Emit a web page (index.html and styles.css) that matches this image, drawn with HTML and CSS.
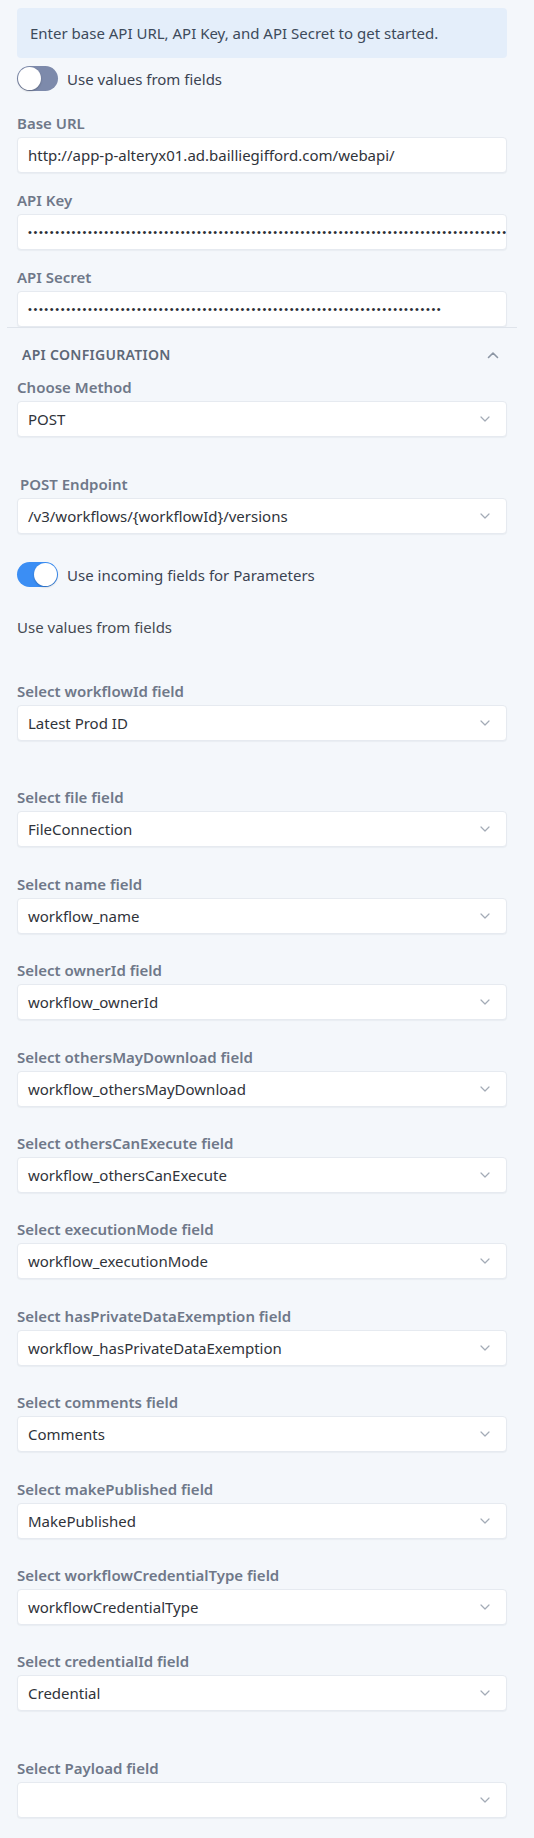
FILE: index.html
```html
<!DOCTYPE html>
<html lang="en">
<head>
<meta charset="utf-8">
<title>API Configuration</title>
<link rel="stylesheet" href="styles.css">
</head>
<body>
<div class="panel">
  <div class="info">Enter base API URL, API Key, and API Secret to get started.</div>

  <div class="toggle-row first-toggle">
    <span class="switch off"><span class="knob"></span></span>
    <span class="toggle-label">Use values from fields</span>
  </div>

  <div class="cred">
    <div class="label">Base URL</div>
    <div class="input">http://app-p-alteryx01.ad.bailliegifford.com/webapi/</div>
  </div>
  <div class="cred">
    <div class="label">API Key</div>
    <div class="input dots">••••••••••••••••••••••••••••••••••••••••••••••••••••••••••••••••••••••••••••••••••••••••••••••••</div>
  </div>
  <div class="cred last">
    <div class="label">API Secret</div>
    <div class="input dots">••••••••••••••••••••••••••••••••••••••••••••••••••••••••••••••••••••••••••••</div>
  </div>

  <section class="accordion">
    <div class="acc-head">
      <span class="acc-title">API CONFIGURATION</span>
      <svg class="caret-up" width="12" height="8" viewBox="0 0 12 8"><path d="M1.5 6.5 L6 2 L10.5 6.5" fill="none" stroke="#8c96a4" stroke-width="1.6" stroke-linecap="round" stroke-linejoin="round"/></svg>
    </div>

    <div class="pick method">
      <div class="label">Choose Method</div>
      <div class="select"><span>POST</span><svg class="chev" width="10" height="6" viewBox="0 0 10 6"><path d="M1 1 L5 5 L9 1" fill="none" stroke="#a3abb6" stroke-width="1.2" stroke-linecap="round" stroke-linejoin="round"/></svg></div>
    </div>

    <div class="pick endpoint">
      <div class="label indent">POST Endpoint</div>
      <div class="select"><span>/v3/workflows/{workflowId}/versions</span><svg class="chev" width="10" height="6" viewBox="0 0 10 6"><path d="M1 1 L5 5 L9 1" fill="none" stroke="#a3abb6" stroke-width="1.2" stroke-linecap="round" stroke-linejoin="round"/></svg></div>
    </div>

    <div class="toggle-row param-toggle">
      <span class="switch on"><span class="knob"></span></span>
      <span class="toggle-label">Use incoming fields for Parameters</span>
    </div>

    <div class="plain">Use values from fields</div>

    <div class="pick spaced">
      <div class="label">Select workflowId field</div>
      <div class="select"><span>Latest Prod ID</span><svg class="chev" width="10" height="6" viewBox="0 0 10 6"><path d="M1 1 L5 5 L9 1" fill="none" stroke="#a3abb6" stroke-width="1.2" stroke-linecap="round" stroke-linejoin="round"/></svg></div>
    </div>

    <div class="pick">
      <div class="label">Select file field</div>
      <div class="select"><span>FileConnection</span><svg class="chev" width="10" height="6" viewBox="0 0 10 6"><path d="M1 1 L5 5 L9 1" fill="none" stroke="#a3abb6" stroke-width="1.2" stroke-linecap="round" stroke-linejoin="round"/></svg></div>
    </div>

    <div class="pick">
      <div class="label">Select name field</div>
      <div class="select"><span>workflow_name</span><svg class="chev" width="10" height="6" viewBox="0 0 10 6"><path d="M1 1 L5 5 L9 1" fill="none" stroke="#a3abb6" stroke-width="1.2" stroke-linecap="round" stroke-linejoin="round"/></svg></div>
    </div>

    <div class="pick">
      <div class="label">Select ownerId field</div>
      <div class="select"><span>workflow_ownerId</span><svg class="chev" width="10" height="6" viewBox="0 0 10 6"><path d="M1 1 L5 5 L9 1" fill="none" stroke="#a3abb6" stroke-width="1.2" stroke-linecap="round" stroke-linejoin="round"/></svg></div>
    </div>

    <div class="pick">
      <div class="label">Select othersMayDownload field</div>
      <div class="select"><span>workflow_othersMayDownload</span><svg class="chev" width="10" height="6" viewBox="0 0 10 6"><path d="M1 1 L5 5 L9 1" fill="none" stroke="#a3abb6" stroke-width="1.2" stroke-linecap="round" stroke-linejoin="round"/></svg></div>
    </div>

    <div class="pick">
      <div class="label">Select othersCanExecute field</div>
      <div class="select"><span>workflow_othersCanExecute</span><svg class="chev" width="10" height="6" viewBox="0 0 10 6"><path d="M1 1 L5 5 L9 1" fill="none" stroke="#a3abb6" stroke-width="1.2" stroke-linecap="round" stroke-linejoin="round"/></svg></div>
    </div>

    <div class="pick">
      <div class="label">Select executionMode field</div>
      <div class="select"><span>workflow_executionMode</span><svg class="chev" width="10" height="6" viewBox="0 0 10 6"><path d="M1 1 L5 5 L9 1" fill="none" stroke="#a3abb6" stroke-width="1.2" stroke-linecap="round" stroke-linejoin="round"/></svg></div>
    </div>

    <div class="pick">
      <div class="label">Select hasPrivateDataExemption field</div>
      <div class="select"><span>workflow_hasPrivateDataExemption</span><svg class="chev" width="10" height="6" viewBox="0 0 10 6"><path d="M1 1 L5 5 L9 1" fill="none" stroke="#a3abb6" stroke-width="1.2" stroke-linecap="round" stroke-linejoin="round"/></svg></div>
    </div>

    <div class="pick">
      <div class="label">Select comments field</div>
      <div class="select"><span>Comments</span><svg class="chev" width="10" height="6" viewBox="0 0 10 6"><path d="M1 1 L5 5 L9 1" fill="none" stroke="#a3abb6" stroke-width="1.2" stroke-linecap="round" stroke-linejoin="round"/></svg></div>
    </div>

    <div class="pick">
      <div class="label">Select makePublished field</div>
      <div class="select"><span>MakePublished</span><svg class="chev" width="10" height="6" viewBox="0 0 10 6"><path d="M1 1 L5 5 L9 1" fill="none" stroke="#a3abb6" stroke-width="1.2" stroke-linecap="round" stroke-linejoin="round"/></svg></div>
    </div>

    <div class="pick">
      <div class="label">Select workflowCredentialType field</div>
      <div class="select"><span>workflowCredentialType</span><svg class="chev" width="10" height="6" viewBox="0 0 10 6"><path d="M1 1 L5 5 L9 1" fill="none" stroke="#a3abb6" stroke-width="1.2" stroke-linecap="round" stroke-linejoin="round"/></svg></div>
    </div>

    <div class="pick spaced">
      <div class="label">Select credentialId field</div>
      <div class="select"><span>Credential</span><svg class="chev" width="10" height="6" viewBox="0 0 10 6"><path d="M1 1 L5 5 L9 1" fill="none" stroke="#a3abb6" stroke-width="1.2" stroke-linecap="round" stroke-linejoin="round"/></svg></div>
    </div>

    <div class="pick">
      <div class="label">Select Payload field</div>
      <div class="select"><span></span><svg class="chev" width="10" height="6" viewBox="0 0 10 6"><path d="M1 1 L5 5 L9 1" fill="none" stroke="#a3abb6" stroke-width="1.2" stroke-linecap="round" stroke-linejoin="round"/></svg></div>
    </div>
  </section>
</div>
</body>
</html>
```

FILE: styles.css
```css
* { box-sizing: border-box; }

html, body {
  margin: 0;
  padding: 0;
  background: #f4f7fb;
}

body {
  font-family: "Noto Sans", "Open Sans", sans-serif;
  font-size: 15px;
  color: #333a44;
}

.panel {
  padding: 8px 27px 0 17px;
}

.info {
  height: 50px;
  display: flex;
  align-items: center;
  padding: 0 13px;
  background: #e4eefa;
  border-radius: 4px;
  color: #3d4a5b;
  font-size: 15px;
}

.toggle-row {
  display: flex;
  align-items: center;
  gap: 9px;
  height: 25px;
}

.first-toggle { margin-top: 8px; margin-bottom: 22px; }

.switch {
  position: relative;
  width: 41px;
  height: 25px;
  border-radius: 13px;
  flex: none;
}
.switch.off { background: #7d8aab; }
.switch.on { background: #3b8ef4; }

.knob {
  position: absolute;
  top: 1px;
  width: 23px;
  height: 23px;
  border-radius: 50%;
  background: #ffffff;
  box-shadow: 0 1px 2px rgba(0, 0, 0, 0.25);
}
.switch.off .knob { left: 1px; }
.switch.on .knob { right: 1px; }

.toggle-label {
  color: #3b4352;
  font-size: 15px;
}

.label {
  line-height: 20px;
  height: 20px;
  margin-bottom: 4px;
  color: #6f7889;
  font-weight: 600;
  font-size: 15px;
}
.label.indent { padding-left: 3px; }

.input, .select {
  height: 36px;
  background: #ffffff;
  border: 1px solid #e6eaf0;
  border-radius: 4px;
  box-shadow: 0 1px 1px rgba(30, 50, 80, 0.05);
  display: flex;
  align-items: center;
  padding: 0 10px;
  color: #2f333a;
  font-size: 15px;
  white-space: nowrap;
  overflow: hidden;
}

.input.dots {
  font-family: "Liberation Sans", Arial, sans-serif;
  font-size: 11px;
  letter-spacing: 1.6px;
  color: #2a2e35;
  padding-right: 6px;
}

.select {
  justify-content: space-between;
  padding-right: 16px;
}

.chev { flex: none; }

/* credential fields (top) */
.cred { margin-bottom: 17px; }
.cred.last { margin-bottom: 0; }

.accordion {
  margin: 0 -10px;
  padding: 0 10px;
  border-top: 1px solid #dfe4eb;
}

.acc-head {
  display: flex;
  align-items: center;
  justify-content: space-between;
  padding: 17px 8px 12px 5px;
  line-height: 20px;
}

.acc-title {
  font-size: 14px;
  font-weight: 600;
  color: #5d6877;
  letter-spacing: 0.3px;
}

/* select fields inside the accordion */
.pick { margin-bottom: 26.4px; }
.pick.spaced { margin-bottom: 46.4px; }
.pick.method { margin-bottom: 37px; }
.pick.endpoint { margin-bottom: 28px; }

.param-toggle { margin-bottom: 30px; }

.plain {
  line-height: 20px;
  color: #454a52;
  font-size: 15px;
  margin-bottom: 44px;
}
```
